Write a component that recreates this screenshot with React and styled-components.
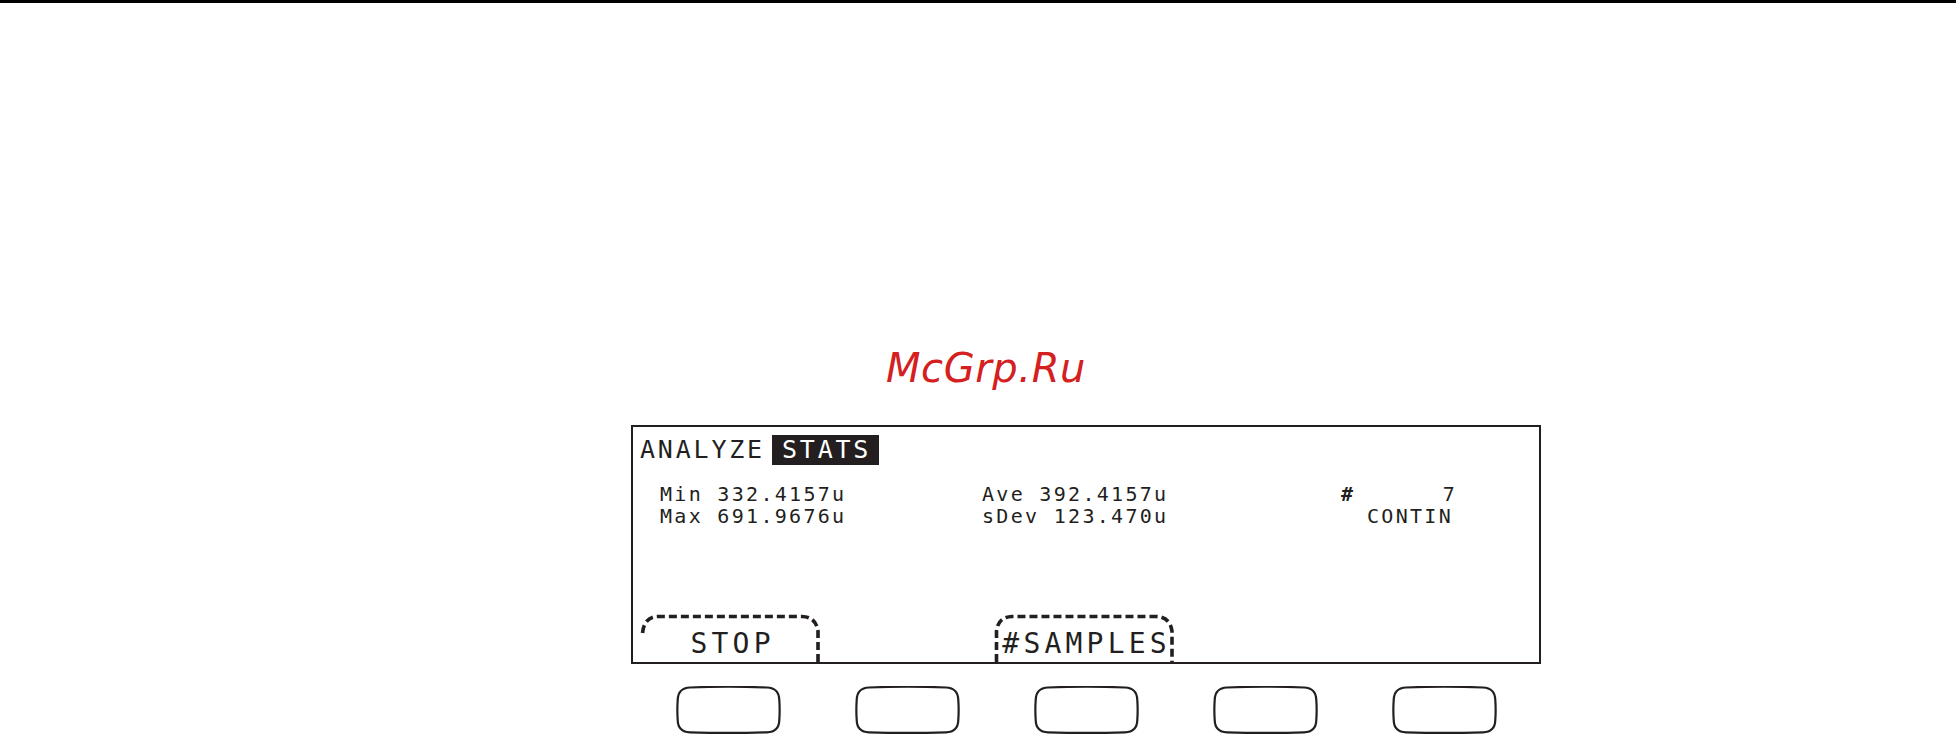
import React from 'react';
import styled, { createGlobalStyle } from 'styled-components';

const GlobalStyle = createGlobalStyle`
  html, body {
    margin: 0;
    padding: 0;
    background: #fff;
  }
  body {
    font-family: "DejaVu Sans Mono", "Liberation Mono", monospace;
    color: #231f20;
  }
`;

const Page = styled.div`
  width: 1956px;
  height: 735px;
  overflow: hidden;
`;

const TopRule = styled.div`
  height: 3px;
  background: #000;
`;

const Watermark = styled.div`
  margin: 345px 0 0 886px;
  font-family: "DejaVu Sans", "Liberation Sans", sans-serif;
  font-style: oblique;
  font-size: 40px;
  line-height: 40px;
  letter-spacing: 0.6px;
  color: #d42020;
`;

const Panel = styled.div`
  margin: 37px 0 0 631px;
  width: 910px;
`;

const Display = styled.div`
  box-sizing: border-box;
  height: 239px;
  border: 2px solid #231f20;
  display: flex;
  flex-direction: column;
  padding: 8px 0 0 7px;
`;

const Header = styled.div`
  display: flex;
  align-items: center;
  font-size: 25px;
  line-height: 30px;
  letter-spacing: 2.8px;
`;

const Title = styled.span`
  margin-right: 7px;
`;

const Badge = styled.span`
  background: #231f20;
  color: #fff;
  padding: 0 8px 0 10px;
  height: 30px;
`;

const Readings = styled.div`
  display: grid;
  grid-template-columns: 322px 359px 116px;
  margin-top: 18px;
  padding-left: 20px;
  font-size: 20px;
  line-height: 22px;
  letter-spacing: 2.3px;
  white-space: pre;
`;

const Count = styled.div`
  display: flex;
  justify-content: space-between;

  & b {
    font-weight: 700;
  }
`;

const Mode = styled.div`
  text-align: right;
  padding-right: 4px;
`;

const Softkeys = styled.div`
  margin-top: auto;
  display: grid;
  grid-template-columns: repeat(5, 177px);
`;

const Tab = styled.div`
  position: relative;
  grid-column: ${p => p.$col};
  width: 181px;
  height: 48px;
  box-sizing: border-box;
  padding: 16px 0 0 4.2px;
  text-align: center;
  font-size: 28px;
  line-height: 28px;
  letter-spacing: 4.2px;

  & svg {
    position: absolute;
    left: 0;
    top: 0;
  }
`;

const Keys = styled.div`
  display: grid;
  grid-template-columns: repeat(5, 179px);
  justify-items: center;
  margin-top: 22px;
  padding-left: 8px;
`;

// dashed label frame over a softkey; "open" leaves the left edge as just the corner
const TabFrame = ({ open }) => {
  const d = open
    ? 'M2.5 19 Q4 3 18 2.5 L162 2.5 Q176 3 178 17 L178 48'
    : 'M2.5 48 L2.5 17 Q4 3 18 2.5 L162 2.5 Q176 3 178 17 L178 48';
  return (
    <svg width="181" height="48" viewBox="0 0 181 48">
      <path d={d} fill="none" stroke="#231f20" strokeWidth="3.6" strokeDasharray="8 4" />
    </svg>
  );
};

const KeyCap = () => (
  <svg width="105" height="48" viewBox="0 0 105 48">
    <path
      d="M14 1.5 Q52.5 0 91 1.5 Q103 2 103.3 14 Q104 24 103.3 34 Q103 46 91 46.3 Q52.5 47.5 14 46.3 Q2 46 1.7 34 Q1 24 1.7 14 Q2 2 14 1.5 Z"
      fill="#fff"
      stroke="#231f20"
      strokeWidth="2.2"
    />
  </svg>
);

const softkeys = [
  { label: 'STOP', col: 1, open: true },
  { label: '#SAMPLES', col: 3, open: false },
];

const App = () => {
  return (
    <Page>
      <GlobalStyle />
      <TopRule />
      <Watermark>McGrp.Ru</Watermark>
      <Panel>
        <Display>
          <Header>
            <Title>ANALYZE</Title>
            <Badge>STATS</Badge>
          </Header>
          <Readings>
            <div>Min 332.4157u</div>
            <div>Ave 392.4157u</div>
            <Count><b>#</b><span>7</span></Count>
            <div>Max 691.9676u</div>
            <div>sDev 123.470u</div>
            <Mode>CONTIN</Mode>
          </Readings>
          <Softkeys>
            {softkeys.map(k => (
              <Tab key={k.label} $col={k.col}>
                <TabFrame open={k.open} />
                {k.label}
              </Tab>
            ))}
          </Softkeys>
        </Display>
        <Keys>
          {[0, 1, 2, 3, 4].map(i => <KeyCap key={i} />)}
        </Keys>
      </Panel>
    </Page>
  );
};

export default App;
